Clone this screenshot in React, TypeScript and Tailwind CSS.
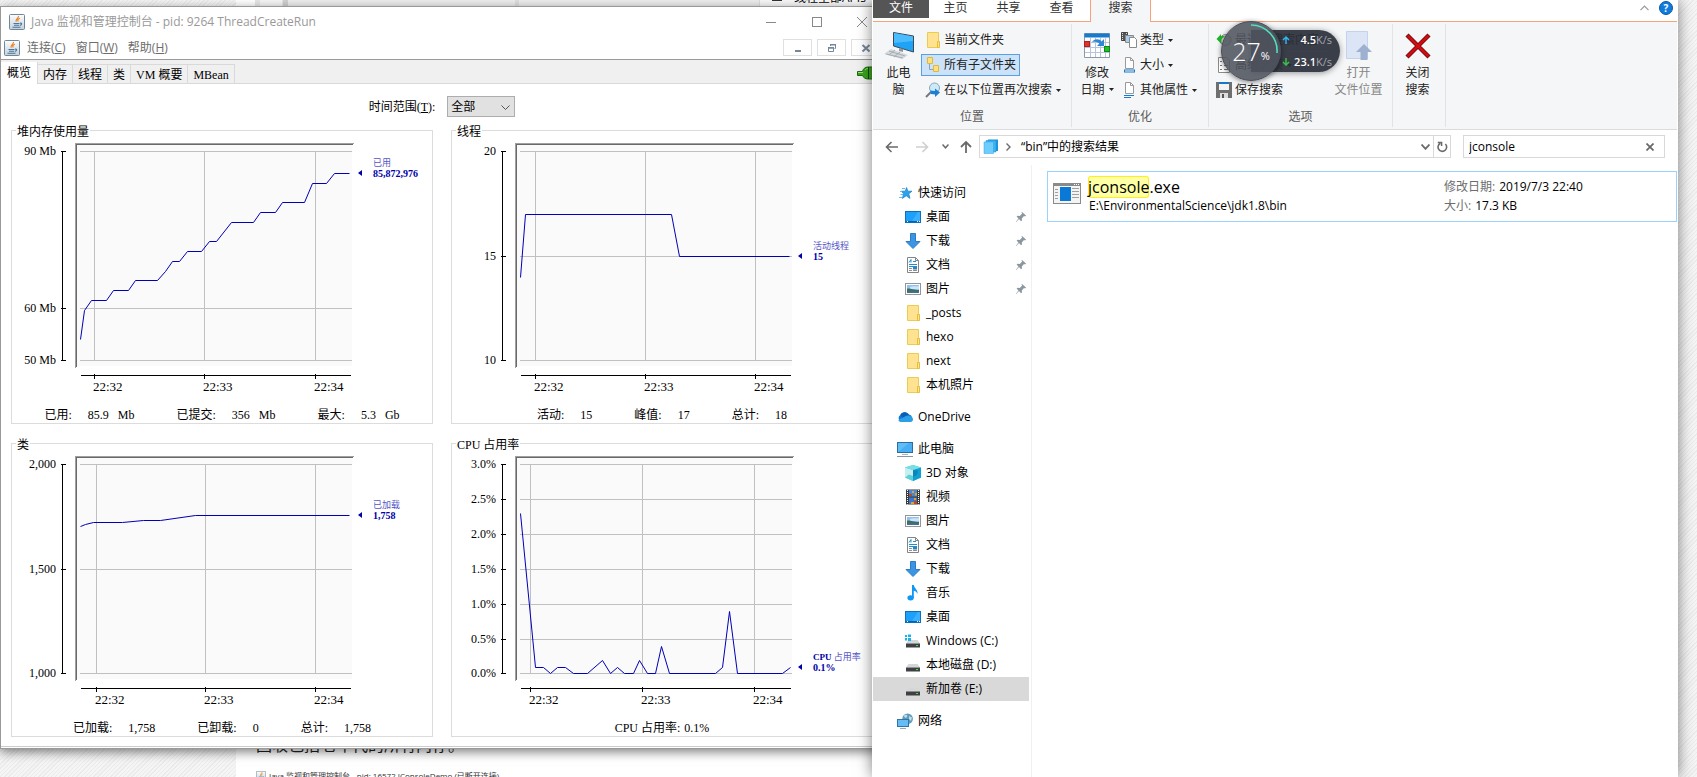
import type { ReactNode } from "react";

type Point = [number, number];

type ChartPanelProps = {
  title: string;
  yLabels: [string, number][];
  times: number[];
  line: Point[];
  legend: ReactNode;
  legendValue: string;
  legendY: number;
  stats: [string, string][];
};

/* ---------- shared small icons ---------- */

const JavaIcon = ({ className = "h-4 w-4" }: { className?: string }) => (
  <svg viewBox="0 0 16 16" className={className} aria-hidden="true">
    <defs>
      <linearGradient id="javaBg" x1="0" y1="0" x2="0" y2="1">
        <stop offset="0" stopColor="#fdfdfd" />
        <stop offset="1" stopColor="#c3d0db" />
      </linearGradient>
    </defs>
    <rect x="0.5" y="0.5" width="15" height="15" rx="1" fill="url(#javaBg)" stroke="#6f8799" />
    <path d="M9.5 2C10 4 6 5 7.2 7.8M10.8 4.2C8.8 5 8.4 6 9.2 7.6" fill="none" stroke="#e8811c" strokeWidth="1.2" />
    <path d="M4.5 9.5H10.5M5 11.2H10M3.5 13.2H11.5M11 9.2C13.4 8.8 13 11 10.8 11.4" fill="none" stroke="#47759b" strokeWidth="1.1" />
  </svg>
);

const Caret = () => (
  <svg viewBox="0 0 5 3" className="h-[3px] w-[5px] shrink-0" aria-hidden="true">
    <path d="M0 0H5L2.5 3Z" fill="#222" />
  </svg>
);

const FolderIcon = () => (
  <svg viewBox="0 0 16 16" className="h-4 w-4" aria-hidden="true">
    <path d="M2.5 0.5H13.5V15.5H2.5Z" fill="#ffe391" stroke="#eccb52" />
    <path d="M12.5 9.5H14.5V15.5H12.5Z" fill="#ffe391" stroke="#e5bd3a" />
  </svg>
);

const DesktopIcon = () => (
  <svg viewBox="0 0 16 16" className="h-4 w-4" aria-hidden="true">
    <rect x="0.5" y="2.5" width="15" height="11" fill="#1ba1fb" stroke="#0e6fbc" />
    <path d="M7 12L13 3H15V12Z" fill="#3bb0ff" />
    <path d="M1 12.5H15" stroke="#0d5fa6" />
    <path d="M2 12.5H3M12 12.5H13M14 12.5H15" stroke="#fff" />
  </svg>
);

const DownloadIcon = () => (
  <svg viewBox="0 0 16 16" className="h-4 w-4" aria-hidden="true">
    <path d="M5.5 0.5H10.5V8.5H15L8 15.5L1 8.5H5.5Z" fill="#3b95e2" stroke="#2a7cc7" />
  </svg>
);

const DocumentIcon = () => (
  <svg viewBox="0 0 16 16" className="h-4 w-4" aria-hidden="true">
    <path d="M2.5 0.5H10.5L13.5 3.5V15.5H2.5Z" fill="#fff" stroke="#848484" />
    <path d="M10.5 0.5V3.5H13.5" fill="none" stroke="#848484" />
    <path d="M4 5.5L6 2.5V5.5M8 4.5H11M4 7.5H12M4 9.5H12" fill="none" stroke="#1e8fd5" />
    <path d="M4 11.5H7M4 13.5H7" stroke="#8f8f8f" />
    <path d="M8 10H12V12.5H8Z" fill="#3d7fb0" />
    <path d="M8 13.5H12" stroke="#8f8f8f" />
  </svg>
);

const PictureIcon = () => (
  <svg viewBox="0 0 16 16" className="h-4 w-4" aria-hidden="true">
    <rect x="0.5" y="2.5" width="15" height="11" fill="#fff" stroke="#959595" />
    <rect x="2" y="4" width="12" height="8" fill="#8fc3ef" />
    <path d="M5 6C8 4.6 11 6 14 5V8H5Z" fill="#cfe4f7" />
    <path d="M2 7.5C6 7 8 9 14 9V12H2Z" fill="#3f6f63" />
    <path d="M2 10.5H14V12H2Z" fill="#44719a" />
  </svg>
);

const StarIcon = () => (
  <svg viewBox="0 0 16 16" className="h-4 w-4" aria-hidden="true">
    <path d="M9.6 2.5L10.8 6.2H15L11.8 8.8L13 13.4L9.2 10.8L5.4 13.4L6.6 8.8L4.4 6.2H8.2Z" fill="#2ba2ee" stroke="#1a7fc6" strokeWidth="0.7" />
    <path d="M5 3.5H8M3 6.5H5M3.5 9.5H6M2 12.5H5" stroke="#69b9ee" />
  </svg>
);

const CloudIcon = () => (
  <svg viewBox="0 0 16 16" className="h-4 w-4" aria-hidden="true">
    <path d="M4 12.5A3.6 3.6 0 0 1 3.4 6A5 5 0 0 1 12 5.6A3.6 3.6 0 0 1 13 12.5Z" fill="#0f78d4" />
    <path d="M3.4 6A5 5 0 0 1 12 5.6L6 9Z" fill="#0a5fb4" />
    <path d="M3 12.8C1.4 12.4 1 11.4 2 10.6L9 7C12 6 16 7.6 16 10.6C16 12 15 13 13.6 13H3.5Z" fill="#2b9fe8" />
  </svg>
);

const ComputerIcon = () => (
  <svg viewBox="0 0 16 16" className="h-4 w-4" aria-hidden="true">
    <rect x="0.5" y="1.5" width="15" height="10" fill="#5fbdf8" stroke="#2c6d9d" />
    <path d="M1 11L12 2H15V11Z" fill="#48aef3" />
    <path d="M5 13.5H11" stroke="#a9b5bf" />
    <path d="M0 15.5H16" stroke="#8796a5" />
  </svg>
);

const CubeIcon = () => (
  <svg viewBox="0 0 16 16" className="h-4 w-4" aria-hidden="true">
    <path d="M8 0L16 2.6V12.4L8 16L0 12.4V2.6Z" fill="#37c0d4" />
    <path d="M0 2.6L8 5V16L0 12.4Z" fill="#c5eff2" />
    <path d="M0 12.4L4 9.5L8 11V16Z" fill="#5fd0d6" />
    <path d="M8 5L16 2.6V12.4L8 16Z" fill="#109fd0" />
    <path d="M8 5L13 5.5L12 10L8 12Z" fill="#0b86bd" />
    <path d="M0 2.6L8 0L16 2.6L8 5Z" fill="#7adfe2" />
  </svg>
);

const VideoIcon = () => (
  <svg viewBox="0 0 16 16" className="h-4 w-4" aria-hidden="true">
    <rect x="1" y="0.5" width="14" height="15" fill="#3a3a3a" />
    <rect x="4" y="1" width="8" height="6.5" fill="#4c86d6" />
    <rect x="4" y="8.5" width="8" height="6.5" fill="#3f74cf" />
    <path d="M7 2H9V4H7ZM10 4H12V6.5H10ZM9 9H11V11H9ZM6 13H9V15H6Z" fill="#dba52c" />
    <path d="M4 5H7V7H4ZM9 12H12V15H9Z" fill="#b64a28" />
    <path d="M2.5 1V15.5M13.5 1V15.5" stroke="#fff" strokeDasharray="1 1" />
  </svg>
);

const MusicIcon = () => (
  <svg viewBox="0 0 16 16" className="h-4 w-4" aria-hidden="true">
    <ellipse cx="5.6" cy="12.8" rx="3.2" ry="2.6" fill="#0f97f5" />
    <path d="M7 0H8.8C9 3 13 4.4 12.6 9C11.8 7 10.4 6 8.8 5.8V13H7Z" fill="#0f97f5" />
  </svg>
);

const DriveIcon = ({ system = false }: { system?: boolean }) => (
  <svg viewBox="0 0 16 16" className="h-4 w-4" aria-hidden="true">
    <path d="M3.5 7H12.5L15 10.5H1Z" fill="#d4d6d8" />
    <rect x="1" y="10.5" width="14" height="4" fill="#3e4043" />
    <path d="M11 12.5H13" stroke="#35e835" />
    {system && (
      <>
        <path d="M0 2H6V8H0Z" fill="#fff" />
        <path d="M0 2H2V4H0ZM3 1.5H6V4H3ZM0 5H2V7.5H0ZM3 5H6V8H3Z" fill="#16b5ea" />
      </>
    )}
  </svg>
);

const NetworkIcon = () => (
  <svg viewBox="0 0 16 16" className="h-4 w-4" aria-hidden="true">
    <circle cx="10.6" cy="5.8" r="5.3" fill="#5f9cb9" />
    <path d="M7 2.6C9 1 11 2 10 4C9 5.4 7 4.6 7 2.6ZM12 3L15 4.6L14 8L12 6Z" fill="#c3dde6" />
    <rect x="0.5" y="6.5" width="11" height="7" fill="#66bdf5" stroke="#2e76aa" />
    <path d="M3 15.5H9" stroke="#9aa8b3" />
  </svg>
);

const PinIcon = () => (
  <svg viewBox="0 0 12 12" className="h-3 w-3" aria-hidden="true">
    <path d="M7 1L11 4.6L10 5.4L9 5L6.8 7.4L7 9.4L6 10.2L4 8L1 11.2L0.8 11L3.4 7.4L1.6 5.6L2.6 4.8L4.8 5L7.2 2.6L6.4 1.6Z" fill="#8b979f" />
  </svg>
);

/* ---------- JConsole ---------- */

const ChartPanel = ({ title, yLabels, times, line, legend, legendValue, legendY, stats }: ChartPanelProps) => (
  <fieldset className="min-w-0 border border-[#dcdcdc]">
    <legend className="ml-1 px-px pt-1 text-xs leading-[15px]">{title}</legend>
    {/* origin of the drawing is the top left corner of the plot grid */}
    <svg viewBox="-68 -11 420 254" className="block h-[254px] w-[420px]" role="img" aria-label={title}>
      <rect x="-3" y="-6" width="275" height="221" fill="#fafafa" />
      <g fill="none" strokeWidth="1" transform="translate(0.5 0.5)" shapeRendering="crispEdges">
        <path d="M-5 216V-8H273" stroke="#a0a0a0" />
        <path d="M-4 215V-7H272" stroke="#696969" />
        {yLabels.map(([label, y]) => (
          <path key={label} d={`M-1 ${y}H271`} stroke="#c0c0c0" />
        ))}
        {times.map((x) => (
          <path key={x} d={`M${x} 0V209`} stroke="#c0c0c0" />
        ))}
        <path d="M-18 0V209M0 224H270" stroke="#000" />
        {yLabels.map(([label, y]) => (
          <path key={label} d={`M-20 ${y}H-15`} stroke="#000" />
        ))}
        {times.map((x) => (
          <path key={x} d={`M${x} 222V227`} stroke="#000" />
        ))}
      </g>
      <polyline
        points={line.map((p) => p.join(",")).join(" ")}
        transform="translate(0.5 0.5)"
        fill="none"
        stroke="#0000b8"
        strokeWidth="1"
      />
      <g fontSize="12" fill="#000">
        {yLabels.map(([label, y]) => (
          <text key={label} x="-24" y={y + 4} textAnchor="end">
            {label}
          </text>
        ))}
      </g>
      <g fontSize="13" fill="#000">
        {times.map((x, i) => (
          <text key={x} x={x - 1} y="240">
            {`22:${32 + i}`}
          </text>
        ))}
      </g>
      <path d={`M278 ${legendY}L282 ${legendY - 3}V${legendY + 3}Z`} fill="#0000a8" />
      <g fill="#0000a8" fontSize="10">
        <text x="293" y={legendY - 7} fill="#5656c8" fontSize="9">
          {legend}
        </text>
        <text x="293" y={legendY + 4} fontWeight="700">
          {legendValue}
        </text>
      </g>
    </svg>
    <dl className="mt-[13px] flex justify-center gap-[42px] text-xs leading-4">
      {stats.map(([name, value]) => (
        <div key={name} className={stats.length > 1 ? "flex gap-4" : "flex gap-1"}>
          <dt>{name}:</dt>
          <dd className="whitespace-pre">{value}</dd>
        </div>
      ))}
    </dl>
  </fieldset>
);

const panels: ChartPanelProps[] = [
  {
    title: "堆内存使用量",
    yLabels: [["90 Mb", 0], ["60 Mb", 157], ["50 Mb", 209]],
    times: [14, 124, 235],
    line: [
      [0, 188], [4, 159], [11, 149], [26, 149], [33, 139], [48, 139], [55, 129], [77, 129], [85, 120],
      [92, 110], [99, 110], [107, 100], [121, 100], [129, 90], [136, 90], [151, 71], [173, 71], [180, 61],
      [195, 61], [202, 51], [224, 51], [232, 32], [246, 32], [254, 22], [269, 22],
    ],
    legend: "已用",
    legendValue: "85,872,976",
    legendY: 22,
    stats: [["已用", "85.9   Mb"], ["已提交", "356   Mb"], ["最大", "5.3   Gb"]],
  },
  {
    title: "线程",
    yLabels: [["20", 0], ["15", 105], ["10", 209]],
    times: [15, 125, 235],
    line: [[0, 126], [5, 63], [151, 63], [159, 105], [269, 105]],
    legend: "活动线程",
    legendValue: "15",
    legendY: 105,
    stats: [["活动", "15"], ["峰值", "17"], ["总计", "18"]],
  },
  {
    title: "类",
    yLabels: [["2,000", 0], ["1,500", 105], ["1,000", 209]],
    times: [16, 125, 235],
    line: [[0, 62], [5, 60], [13, 58], [42, 58], [63, 56], [80, 56], [115, 51], [269, 51]],
    legend: "已加载",
    legendValue: "1,758",
    legendY: 51,
    stats: [["已加载", "1,758"], ["已卸载", "0"], ["总计", "1,758"]],
  },
  {
    title: "CPU 占用率",
    yLabels: [["3.0%", 0], ["2.5%", 35], ["2.0%", 70], ["1.5%", 105], ["1.0%", 140], ["0.5%", 175], ["0.0%", 209]],
    times: [10, 122, 234],
    line: [
      [0, 49], [15, 203], [23, 203], [30, 209], [37, 203], [45, 203], [53, 209], [67, 209], [82, 196],
      [90, 209], [97, 203], [104, 209], [113, 209], [119, 196], [127, 209], [135, 209], [141, 182],
      [149, 209], [195, 209], [202, 203], [209, 147], [217, 209], [262, 209], [270, 203],
    ],
    legend: (
      <>
        <tspan fontWeight="700" fontSize="9" fill="#0000a8">CPU</tspan> 占用率
      </>
    ),
    legendValue: "0.1%",
    legendY: 203,
    stats: [["CPU 占用率", "0.1%"]],
  },
];

const consoleTabs = ["内存", "线程", "类", "VM 概要", "MBean"];

const JConsoleWindow = () => (
  <section className="w-[885px] border border-r-0 border-[#999] bg-white shadow-[0_3px_10px_rgba(0,0,0,0.5)]">
    <header className="flex h-[29px] items-center pl-2 text-[#999]">
      <JavaIcon />
      <h1 className="ml-[6px] flex-1 text-xs leading-4">Java 监视和管理控制台 - pid: 9264 ThreadCreateRun</h1>
      <button aria-label="最小化" className="flex w-[46px] justify-center">
        <svg viewBox="0 0 10 10" className="h-[10px] w-[10px]"><path d="M0 5.5H10" stroke="#888" /></svg>
      </button>
      <button aria-label="最大化" className="flex w-[45px] justify-center">
        <svg viewBox="0 0 10 10" className="h-[10px] w-[10px]"><rect x="0.5" y="0.5" width="9" height="9" fill="none" stroke="#888" /></svg>
      </button>
      <button aria-label="关闭" className="flex w-[46px] justify-center">
        <svg viewBox="0 0 10 10" className="h-[10px] w-[10px]"><path d="M0 0L10 10M10 0L0 10" stroke="#888" /></svg>
      </button>
    </header>
    <nav className="flex h-6 items-center border-b border-[#999] pl-[3px] pr-[5px] text-xs leading-4 text-[#6d6d6d]">
      <JavaIcon />
      <button className="ml-[7px]">连接(<u>C</u>)</button>
      <button className="ml-[10px]">窗口(<u>W</u>)</button>
      <button className="ml-[10px] mr-auto">帮助(<u>H</u>)</button>
      <div className="flex gap-[5px]">
        <button aria-label="最小化子窗口" className="flex h-[17px] w-[29px] items-center justify-center border border-[#e0e0e0]">
          <svg viewBox="0 0 10 10" className="h-[10px] w-[10px]"><path d="M2 7H8V9H2Z" fill="#76879a" /></svg>
        </button>
        <button aria-label="还原子窗口" className="flex h-[17px] w-[29px] items-center justify-center border border-[#e0e0e0]">
          <svg viewBox="0 0 10 10" className="h-[10px] w-[10px]">
            <path d="M1.5 5H6.5V8.5H1.5ZM3.5 3V1.5H8.5V5.5H7.5" fill="none" stroke="#76879a" />
            <path d="M1 4H7V5.5H1ZM3 1H9V2.4H3Z" fill="#76879a" />
          </svg>
        </button>
        <button aria-label="关闭子窗口" className="flex h-[17px] w-[29px] items-center justify-center border border-[#e0e0e0]">
          <svg viewBox="0 0 10 10" className="h-[10px] w-[10px]"><path d="M1.5 2L8.5 8.5M8.5 2L1.5 8.5" stroke="#76879a" strokeWidth="2" /></svg>
        </button>
      </div>
    </nav>
    <div className="font-[family-name:'Liberation_Serif','Noto_Sans_CJK_SC',serif]">
      <div className="flex h-6 items-end border-b border-[#d9d9d9] bg-[#f0f0f0] pr-3 text-xs leading-4">
        <button className="-mb-px h-[22px] border-r border-[#d9d9d9] bg-white px-[6px]">概览</button>
        {consoleTabs.map((tab) => (
          <button key={tab} className="h-[19px] border-r border-t border-[#d9d9d9] px-[5px] pt-px">
            {tab}
          </button>
        ))}
        <svg viewBox="0 0 16 14" className="mb-[3px] ml-auto h-[14px] w-4" role="img" aria-label="已连接">
          <path d="M0.5 5.5H5.5C6 3 8 1 11 1H16V13H11C8 13 6 11 5.5 9.5H0.5Z" fill="#3aa51e" stroke="#1d6b0d" />
          <path d="M1 6.5H6M8 4C9 2.6 10 2.4 11 2.4" stroke="#9be07c" fill="none" />
          <path d="M11.5 1V13" stroke="#0f4a06" />
        </svg>
      </div>
      <div className="flex flex-col pb-[9px] pl-[10px] pr-3 pt-3">
        <div className="mb-1 flex h-[21px] items-center justify-center text-xs">
          <label htmlFor="range" className="mr-3">时间范围(<u>T</u>):</label>
          <div className="relative">
            <select id="range" className="block h-[21px] w-[68px] appearance-none border border-[#adadad] bg-[#e1e1e1] pl-[3px] text-xs leading-4">
              <option>全部</option>
            </select>
            <svg viewBox="0 0 9 5" className="pointer-events-none absolute right-[5px] top-[9px] h-[5px] w-[9px]" aria-hidden="true">
              <path d="M0.5 0.5L4.5 4.5L8.5 0.5" fill="none" stroke="#555" />
            </svg>
          </div>
        </div>
        <div className="grid grid-cols-2 gap-x-[18px] gap-y-[10px]">
          {panels.map((panel) => (
            <ChartPanel key={panel.title} {...panel} />
          ))}
        </div>
      </div>
      <div className="h-[2px] border-t border-[#ccc]" />
    </div>
  </section>
);

/* ---------- Explorer ---------- */

const RibbonGroup = ({ label, className, children }: { label: string; className: string; children: ReactNode }) => (
  <div className={`my-[2px] flex shrink-0 flex-col border-r border-[#e2e3e4] ${className}`}>
    <div className="flex flex-1 pt-[5px]">{children}</div>
    <div className="h-[18px] text-center text-[#5a5a5a]">{label}</div>
  </div>
);

const RibbonItem = ({ icon, children, caret, active }: { icon: ReactNode; children: ReactNode; caret?: boolean; active?: boolean }) => (
  <button
    className={`flex h-[22px] items-center gap-[3px] whitespace-nowrap border px-[3px] ${
      active ? "border-[#5c9fe0] bg-[#cce2f8]" : "border-transparent"
    }`}>
    {icon}
    {children}
    {caret && <span className="ml-px"><Caret /></span>}
  </button>
);

const ribbonTabs = ["主页", "共享", "查看"];

const PageMark = ({ lines }: { lines: number }) => (
  <svg viewBox="0 0 16 16" className="h-4 w-4" aria-hidden="true">
    <path d="M4.5 0.5H9.5L12.5 3.5V11.5H4.5Z" fill="#fff" stroke="#9a9a9a" />
    <path d="M9.5 0.5V3.5H12.5" fill="none" stroke="#9a9a9a" />
    {lines === 1 ? (
      <rect x="3.5" y="13" width="10" height="2" fill="#fff" stroke="#1979ca" />
    ) : (
      <path d="M3 13.5H13M3 15.5H10" stroke="#1979ca" />
    )}
  </svg>
);

const Ribbon = () => (
  <div className="flex h-[108px] border-b border-[#dadbdc] bg-[#f5f6f7] text-[#222]">
    <RibbonGroup label="位置" className="w-[199px]">
      <button className="flex w-[48px] flex-col items-center pl-[3px] leading-[17px]">
        <svg viewBox="0 0 32 32" className="mb-[3px] h-8 w-8" aria-hidden="true">
          <path d="M10.5 3.5L30.5 7V23L10.5 17Z" fill="#1fa3f6" stroke="#3c4a55" />
          <path d="M11 4L30 7.4V12L11 14Z" fill="#4cbcff" />
          <path d="M16 19L20 20V23L16 22Z" fill="#8d979f" />
          <path d="M1 25L8 20L25 26L19 30Z" fill="#d3d8dc" />
          <path d="M3 25L20 29M6 22L22 27M6 26L12 21M11 28L17 23" stroke="#9aa3aa" strokeWidth="0.8" />
        </svg>
        <span>此电</span>
        <span>脑</span>
      </button>
      <div className="flex flex-col items-start gap-[3px]">
        <RibbonItem icon={<FolderIcon />}>当前文件夹</RibbonItem>
        <RibbonItem
          active
          icon={
            <svg viewBox="0 0 16 16" className="h-4 w-4" aria-hidden="true">
              <path d="M4.5 6V12.5H10" fill="none" stroke="#8ba3bb" />
              <path d="M2.5 0.5H7.5V6.5H2.5ZM8.5 8.5H13.5V14.5H8.5Z" fill="#ffe07c" stroke="#e0b93a" />
            </svg>
          }>
          所有子文件夹
        </RibbonItem>
        <RibbonItem
          caret
          icon={
            <svg viewBox="0 0 16 16" className="h-4 w-4" aria-hidden="true">
              <path d="M1 15L6 10" stroke="#6f7a84" strokeWidth="2" />
              <circle cx="9.5" cy="6" r="5" fill="#cdeafb" stroke="#8ba6b8" />
              <path d="M5 8.5L10 9V6.5L15 10.5L10 15V12.5L6 12Z" fill="#1c7fd0" />
            </svg>
          }>
          在以下位置再次搜索
        </RibbonItem>
      </div>
    </RibbonGroup>
    <RibbonGroup label="优化" className="w-[137px]">
      <button className="flex w-[45px] flex-col items-center whitespace-nowrap pl-[5px] leading-[17px]">
        <svg viewBox="0 0 26 32" className="mb-[3px] h-8 w-[26px]" aria-hidden="true">
          <path d="M0.5 4.5H25.5V28.5H0.5Z" fill="#fff" stroke="#8d9aa6" />
          <path d="M0.5 4.5H25.5V8.5H0.5Z" fill="#1979ca" />
          <path d="M1 13.5H25M1 18.5H25M1 23.5H25M6.5 9V28M11.5 9V28M16.5 9V28M21.5 9V28" stroke="#b5c6d8" />
          <rect x="0.5" y="12.5" width="5" height="5" fill="#e0322b" stroke="#b01f1a" />
          <rect x="20.5" y="17.5" width="5" height="5" fill="#1dc224" stroke="#12881a" />
          <path d="M8 13C11 9 16 10 17.5 12.5L20 10V17H13L15.4 14.6C13.4 12.6 11 12.6 8 13Z" fill="#3088d4" />
        </svg>
        <span>修改</span>
        <span className="flex items-center gap-1">日期<Caret /></span>
      </button>
      <div className="flex flex-col items-start gap-[3px]">
        <RibbonItem
          caret
          icon={
            <svg viewBox="0 0 16 16" className="h-4 w-4" aria-hidden="true">
              <path d="M0.5 0.5H6.5V8.5H0.5Z" fill="#555" stroke="#444" />
              <path d="M1.5 1V9M5.5 1V9" stroke="#ddd" strokeDasharray="1 1" />
              <path d="M4.5 3.5H12.5V10.5H4.5Z" fill="#a9cdea" stroke="#8a8a8a" />
              <path d="M8.5 5.5H13.5L15.5 7.5V15.5H8.5Z" fill="#fff" stroke="#8a8a8a" />
            </svg>
          }>
          类型
        </RibbonItem>
        <RibbonItem caret icon={<PageMark lines={1} />}>大小</RibbonItem>
        <RibbonItem caret icon={<PageMark lines={2} />}>其他属性</RibbonItem>
      </div>
    </RibbonGroup>
    <RibbonGroup label="选项" className="relative w-[184px]">
      <div className="ml-[3px] flex w-[113px] flex-col items-start gap-[3px]">
        <RibbonItem
          caret
          icon={
            <svg viewBox="0 0 16 16" className="h-4 w-4" aria-hidden="true">
              <circle cx="9.5" cy="8" r="5.5" fill="#ddd" stroke="#888" />
              <path d="M0.5 7L5 2V4.4C8 3 9 5 9 5C6 5.4 5.4 7 5.4 9.4V12Z" fill="#23b32b" />
            </svg>
          }>
          最近的搜索内容
        </RibbonItem>
        <RibbonItem
          caret
          icon={
            <svg viewBox="0 0 16 16" className="h-4 w-4" aria-hidden="true">
              <path d="M2.5 0.5H10.5L13.5 3.5V15.5H2.5Z" fill="#fff" stroke="#8a8a8a" />
              <path d="M4 4.5H6M4 8.5H6M4 12.5H6M8 8.5H12M8 12.5H12" stroke="#777" />
            </svg>
          }>
          高级选项
        </RibbonItem>
        <RibbonItem
          icon={
            <svg viewBox="0 0 16 16" className="h-4 w-4" aria-hidden="true">
              <path d="M0 0H16V16H0Z" fill="#6f6f6f" />
              <path d="M3 0H13V8H3Z" fill="#f2f2f2" />
              <path d="M3 0H13V2H3Z" fill="#1677c8" />
              <path d="M4 11H12V16H4Z" fill="#ddd" />
              <path d="M6 12H8V16H6Z" fill="#555" />
            </svg>
          }>
          保存搜索
        </RibbonItem>
      </div>
      <button disabled className="flex flex-1 flex-col items-center whitespace-nowrap leading-[17px] text-[#868686]">
        <svg viewBox="0 0 26 32" className="mb-[3px] h-8 w-[26px]" aria-hidden="true">
          <path d="M0.5 2.5H21.5V29.5H0.5Z" fill="#dbe5f5" stroke="#c3d3eb" />
          <path d="M18 15L26 23H21.5V31H14.5V23H10Z" fill="#9db0cf" />
        </svg>
        <span>打开</span>
        <span>文件位置</span>
      </button>
      <NetSpeedWidget />
    </RibbonGroup>
    <RibbonGroup label="" className="w-[53px]">
      <button className="flex flex-1 flex-col items-center pr-[3px] leading-[17px]">
        <svg viewBox="0 0 26 32" className="mb-[3px] h-8 w-[26px]" aria-hidden="true">
          <path d="M2 6L24 28M24 6L2 28" stroke="#7d0a0a" strokeWidth="4.4" />
          <path d="M2.6 6.6L23.4 27.4M23.4 6.6L2.6 27.4" stroke="#d00d12" strokeWidth="2.6" />
        </svg>
        <span>关闭</span>
        <span>搜索</span>
      </button>
    </RibbonGroup>
  </div>
);

/* floating network meter, lies over the ribbon */
const NetSpeedWidget = () => (
  <div className="absolute -top-[3px] left-[12px] flex h-[60px] w-[119px] items-center text-white">
    <div className="ml-[30px] flex h-[42px] flex-1 flex-col rounded-r-full bg-[#2b2f3a]/93 pl-[31px] pr-2 shadow-[0_1px_6px_rgba(0,0,0,0.4)]">
      <div className="flex flex-1 items-center border-b border-[#3b404c]">
        <svg viewBox="0 0 8 8" className="h-2 w-2" aria-hidden="true"><path d="M4 8V1M1 4L4 1L7 4" fill="none" stroke="#33b4f0" strokeWidth="1.5" /></svg>
        <span className="ml-auto text-[11px] font-semibold">4.5</span>
        <span className="text-[11px] text-[#a3a7b0]">K/s</span>
      </div>
      <div className="flex flex-1 items-center">
        <svg viewBox="0 0 8 8" className="h-2 w-2" aria-hidden="true"><path d="M4 0V7M1 4L4 7L7 4" fill="none" stroke="#38c046" strokeWidth="1.5" /></svg>
        <span className="ml-auto text-[11px] font-semibold">23.1</span>
        <span className="text-[11px] text-[#a3a7b0]">K/s</span>
      </div>
    </div>
    <div className="absolute left-0 top-0 flex h-[60px] w-[60px] items-center justify-center rounded-full border border-[#4a4d5a] bg-[#50545f]/88 shadow-[0_1px_5px_rgba(0,0,0,0.5)]">
      <svg viewBox="0 0 60 60" className="absolute h-[60px] w-[60px]" aria-hidden="true">
        <path d="M30 4A26 26 0 0 1 56 32" fill="none" stroke="#4fe0bf" strokeWidth="1.6" />
      </svg>
      <span className="text-[25px] font-light">27</span>
      <span className="mt-[10px] text-[11px]">%</span>
    </div>
  </div>
);

const AddressBar = () => (
  <div className="flex h-7 items-center pl-3 pr-3 pt-[5px]">
    <button aria-label="后退">
      <svg viewBox="0 0 14 14" className="h-[14px] w-[14px]"><path d="M13 7H2M6.5 2L1.5 7L6.5 12" fill="none" stroke="#6a6a6a" strokeWidth="1.6" /></svg>
    </button>
    <button aria-label="前进" className="ml-4">
      <svg viewBox="0 0 14 14" className="h-[14px] w-[14px]"><path d="M1 7H12M7.5 2L12.5 7L7.5 12" fill="none" stroke="#cfcfcf" strokeWidth="1.6" /></svg>
    </button>
    <button aria-label="最近浏览的位置" className="ml-[13px]">
      <svg viewBox="0 0 7 5" className="h-[5px] w-[7px]"><path d="M0.5 0.5L3.5 3.8L6.5 0.5" fill="none" stroke="#6a6a6a" strokeWidth="1.5" /></svg>
    </button>
    <button aria-label="上移" className="ml-[10px]">
      <svg viewBox="0 0 14 14" className="h-[14px] w-[14px]"><path d="M7 13V2M2 7L7 2L12 7" fill="none" stroke="#6a6a6a" strokeWidth="1.8" /></svg>
    </button>
    <div className="ml-[6px] flex h-[23px] flex-1 items-center border border-[#d9d9d9] pl-[3px]">
      <svg viewBox="0 0 16 16" className="h-4 w-4" aria-hidden="true">
        <path d="M5 0.5H15V12H5Z" fill="#1c93dd" />
        <path d="M3 1.5H13V13H3Z" fill="#3fb2f0" stroke="#1c93dd" strokeWidth="0.5" />
        <path d="M1 3H10.5V14.5H1Z" fill="#6fcdfc" stroke="#2aa5ea" strokeWidth="0.5" />
      </svg>
      <svg viewBox="0 0 5 8" className="ml-[7px] h-2 w-[5px]" aria-hidden="true"><path d="M0.5 0.5L4 4L0.5 7.5" fill="none" stroke="#6a6a6a" strokeWidth="1.4" /></svg>
      <span className="ml-[10px] flex-1">“bin”中的搜索结果</span>
      <button aria-label="展开地址" className="mr-[3px]">
        <svg viewBox="0 0 9 6" className="h-[6px] w-[9px]"><path d="M0.5 0.5L4.5 4.8L8.5 0.5" fill="none" stroke="#6a6a6a" strokeWidth="1.8" /></svg>
      </button>
      <button aria-label="刷新" className="flex h-full w-[17px] items-center justify-center border-l border-[#d9d9d9]">
        <svg viewBox="0 0 11 12" className="h-3 w-[11px]">
          <path d="M3.4 2.2A4.3 4.3 0 1 0 8.4 3" fill="none" stroke="#6a6a6a" strokeWidth="1.6" />
          <path d="M0.8 1.4H4.6V5" fill="none" stroke="#6a6a6a" strokeWidth="1.5" />
        </svg>
      </button>
    </div>
    <div className="ml-3 flex h-[23px] w-[202px] items-center border border-[#d9d9d9] px-[5px]">
      <input aria-label="搜索" defaultValue="jconsole" className="min-w-0 flex-1 bg-transparent outline-none" />
      <button aria-label="清除搜索" className="mr-[5px]">
        <svg viewBox="0 0 8 8" className="h-2 w-2"><path d="M0.5 0.5L7.5 7.5M7.5 0.5L0.5 7.5" stroke="#666" strokeWidth="1.7" /></svg>
      </button>
    </div>
  </div>
);

type NavItem = { label: string; icon: ReactNode; pinned?: boolean; active?: boolean };
type NavGroup = { root: NavItem; items: NavItem[] };

const navGroups: NavGroup[] = [
  {
    root: { label: "快速访问", icon: <StarIcon /> },
    items: [
      { label: "桌面", icon: <DesktopIcon />, pinned: true },
      { label: "下载", icon: <DownloadIcon />, pinned: true },
      { label: "文档", icon: <DocumentIcon />, pinned: true },
      { label: "图片", icon: <PictureIcon />, pinned: true },
      { label: "_posts", icon: <FolderIcon /> },
      { label: "hexo", icon: <FolderIcon /> },
      { label: "next", icon: <FolderIcon /> },
      { label: "本机照片", icon: <FolderIcon /> },
    ],
  },
  { root: { label: "OneDrive", icon: <CloudIcon /> }, items: [] },
  {
    root: { label: "此电脑", icon: <ComputerIcon /> },
    items: [
      { label: "3D 对象", icon: <CubeIcon /> },
      { label: "视频", icon: <VideoIcon /> },
      { label: "图片", icon: <PictureIcon /> },
      { label: "文档", icon: <DocumentIcon /> },
      { label: "下载", icon: <DownloadIcon /> },
      { label: "音乐", icon: <MusicIcon /> },
      { label: "桌面", icon: <DesktopIcon /> },
      { label: "Windows (C:)", icon: <DriveIcon system /> },
      { label: "本地磁盘 (D:)", icon: <DriveIcon /> },
      { label: "新加卷 (E:)", icon: <DriveIcon />, active: true },
    ],
  },
  { root: { label: "网络", icon: <NetworkIcon /> }, items: [] },
];

const NavPane = () => (
  <nav className="mt-[7px] flex w-[159px] shrink-0 flex-col gap-2 border-r border-[#f0f0f0] pr-[2px] pt-4">
    {navGroups.map(({ root, items }) => (
      <div key={root.label}>
        <a href="#" className="flex h-6 items-center gap-[5px] pl-6">
          {root.icon}
          {root.label}
        </a>
        {items.map((item) => (
          <a
            key={item.label}
            href="#"
            className={`flex h-6 items-center gap-[5px] pl-8 pr-[2px] ${item.active ? "bg-[#d9d9d9]" : ""}`}>
            {item.icon}
            {item.label}
            {item.pinned && <span className="ml-auto"><PinIcon /></span>}
          </a>
        ))}
      </div>
    ))}
  </nav>
);

const ExplorerWindow = () => (
  <section className="relative z-10 flex min-w-0 flex-1 flex-col bg-white px-px text-xs leading-4 text-black shadow-[0_0_14px_rgba(0,0,0,0.5)]">
    <div className="flex h-[22px] border-b border-[#f5a47a]">
      <button className="h-[18px] w-14 bg-[#555] pb-1 text-white">文件</button>
      <div className="flex">
        {ribbonTabs.map((tab) => (
          <button key={tab} className="w-[53px] pb-[7px] text-[#333]">{tab}</button>
        ))}
      </div>
      <button className="-mb-px ml-[2px] w-[61px] border-x border-[#f5a47a] bg-[#f5f6f7] pb-2 text-[#333]">搜索</button>
      <div className="ml-auto flex items-start gap-[10px] pr-1 pt-px">
        <button aria-label="折叠功能区" className="mt-1">
          <svg viewBox="0 0 9 6" className="h-[6px] w-[9px]"><path d="M0.5 5.2L4.5 1L8.5 5.2" fill="none" stroke="#999" strokeWidth="1.2" /></svg>
        </button>
        <button aria-label="帮助" className="flex h-[14px] w-[14px] items-center justify-center rounded-full border border-[#0a5aa5] bg-[#0f7bdc] text-[10px] font-bold leading-none text-white">
          ?
        </button>
      </div>
    </div>
    <Ribbon />
    <AddressBar />
    <div className="flex flex-1">
      <NavPane />
      <main className="flex-1 pl-[15px] pt-[13px]">
        <article className="flex h-[51px] border border-[#99d1ff] pl-[5px]">
          <svg viewBox="0 0 28 22" className="mt-[11px] h-[22px] w-7 shrink-0" aria-hidden="true">
            <rect x="0.5" y="0.5" width="27" height="20" fill="#f4f4f4" stroke="#8a8a8a" />
            <path d="M1 2H27" stroke="#8a8a8a" strokeWidth="2" />
            <path d="M21 1.5H22M23 1.5H24M25 1.5H26" stroke="#fff" />
            <rect x="7" y="4" width="11" height="14" fill="#0a78d7" />
            <path d="M2 6.5H5M2 9.5H5M2 12.5H5M2 15.5H5M19 5.5H26M19 8.5H26M19 11.5H26M19 14.5H26" stroke="#a0a0a0" />
          </svg>
          <div className="ml-[7px] min-w-0 flex-1 pt-1">
            <h2 className="text-base leading-[22px]">
              <mark className="rounded-[3px] bg-[#ffffa6] text-black shadow-[inset_0_0_0_1px_#ffee1f]">jconsole</mark>.exe
            </h2>
            <p className="pl-px">E:\EnvironmentalScience\jdk1.8\bin</p>
          </div>
          <dl className="w-[232px] shrink-0 pt-[7px]">
            <div className="flex gap-1">
              <dt className="text-[#6d6d6d]">修改日期:</dt>
              <dd>2019/7/3 22:40</dd>
            </div>
            <div className="mt-[3px] flex gap-1">
              <dt className="text-[#6d6d6d]">大小:</dt>
              <dd>17.3 KB</dd>
            </div>
          </dl>
        </article>
      </main>
    </div>
  </section>
);

const App = () => (
  <div className="flex h-screen overflow-hidden bg-[#f4f4f4] bg-[repeating-linear-gradient(135deg,#ebebeb_0px,#ebebeb_1px,#f5f5f5_1px,#f5f5f5_3px)] font-[family-name:'Open_Sans','Noto_Sans_CJK_SC',sans-serif] text-black">
    <div className="flex w-[872px] shrink-0 flex-col">
      {/* pages peeking out above the console */}
      <div className="flex h-[6px] overflow-hidden pl-[236px] text-xs">
        <div className="w-[19px] bg-white" />
        <div className="w-[28px] border-l-[5px] border-r border-[#e6e6e6] bg-[#f6f6f6]" />
        <div className="w-[232px] border-l-[5px] border-[#d0d0d0] bg-[#ededed]" />
        <div className="w-[244px] border-l-[4px] border-[#dedede] bg-[#ededed]" />
        <div className="flex flex-1 items-end border-l border-[#ddd] bg-[#f8f8f8] pl-3">
          <span className="mb-[5px] mr-3 h-[2px] w-[10px] bg-[#333]" />
          <span className="whitespace-nowrap leading-4">线程全部APIs</span>
        </div>
      </div>
      <div className="relative z-[1]">
        <JConsoleWindow />
      </div>
      <div className="ml-[236px] flex-1 overflow-hidden bg-white pl-5">
        <p className="-mt-4 text-base leading-6 text-[#222]">回收包括老年代的所有内存。</p>
        <p className="mt-3 flex items-center gap-[3px] text-[8px] leading-[14px] text-[#333]">
          <JavaIcon className="h-[10px] w-[10px]" />
          Java 监视和管理控制台 - pid: 16572 JConsoleDemo (已断开连接)
        </p>
      </div>
    </div>
    <ExplorerWindow />
    <div className="w-[19px] shrink-0" />
  </div>
);

export default App;
